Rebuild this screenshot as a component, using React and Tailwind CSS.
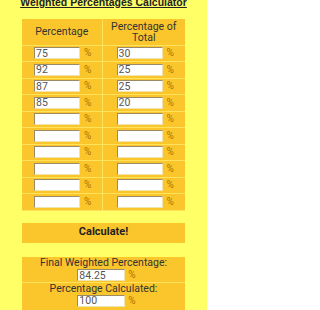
import React from 'react';

const rows = [
  ['75', '30'],
  ['92', '25'],
  ['87', '25'],
  ['85', '20'],
  ['', ''],
  ['', ''],
  ['', ''],
  ['', ''],
  ['', ''],
  ['', ''],
];

const Field = ({ value, width = 'w-[46px]' }) => (
  <input
    readOnly
    value={value}
    className={`${width} h-[12px] bg-white border border-t-[#9a8a66] border-l-[#9a8a66] border-r-[#efe3b0] border-b-[#efe3b0] px-[1px] text-[10.5px] leading-[10px] text-[#555] outline-none`}
  />
);

const Pct = () => <span className="text-[10px] leading-[12px] text-[#a87400]">%</span>;

export default function App() {
  return (
    <div className="w-[207px] h-[310px] bg-[#ffff66] font-['Roboto','Liberation_Sans',sans-serif] text-[#333] overflow-hidden">
      {/* Title, partly scrolled off */}
      <h1 className="mt-[-4px] h-[13px] text-center text-[10.5px] leading-[12px] font-bold underline font-['Liberation_Sans',sans-serif] text-[#222]">
        Weighted Percentages Calculator
      </h1>

      <div className="mx-[22px] mt-[10px]">
        <table className="w-full border-collapse bg-[#fbc62c] text-[10.5px]">
          <thead>
            <tr className="h-[26px] border-b border-[#fde35c]">
              <th className="w-[80px] border-r border-[#fde35c] font-normal leading-[12px]">Percentage</th>
              <th className="font-normal leading-[11.5px] pt-[1px]">
                Percentage of
                <br />
                Total
              </th>
            </tr>
          </thead>
          <tbody>
            {rows.map((r, i) => (
              <tr key={i} className="h-[16.5px] border-b border-[#fde35c]">
                <td className="border-r border-[#fde35c] pl-[12px]">
                  <div className="flex items-center gap-[4px]">
                    <Field value={r[0]} />
                    <Pct />
                  </div>
                </td>
                <td className="pl-[14px]">
                  <div className="flex items-center gap-[4px]">
                    <Field value={r[1]} />
                    <Pct />
                  </div>
                </td>
              </tr>
            ))}
          </tbody>
        </table>

        <button className="mt-[12px] w-full h-[20px] bg-[#fbc62c] text-[11px] font-bold text-[#222]">
          Calculate!
        </button>

        <div className="mt-[14px] bg-[#fbc62c] text-[10.5px]">
          <div className="flex flex-col items-center pb-[1px] border-b border-[#fde35c]">
            <span className="leading-[12.5px]">Final Weighted Percentage:</span>
            <div className="flex items-center gap-[3px] ml-[6px]">
              <Field value="84.25" width="w-[48px]" />
              <Pct />
            </div>
          </div>
          <div className="flex flex-col items-center pb-[4px]">
            <span className="leading-[11.5px]">Percentage Calculated:</span>
            <div className="flex items-center gap-[3px] ml-[6px]">
              <Field value="100" width="w-[48px]" />
              <Pct />
            </div>
          </div>
        </div>
      </div>
    </div>
  );
}
